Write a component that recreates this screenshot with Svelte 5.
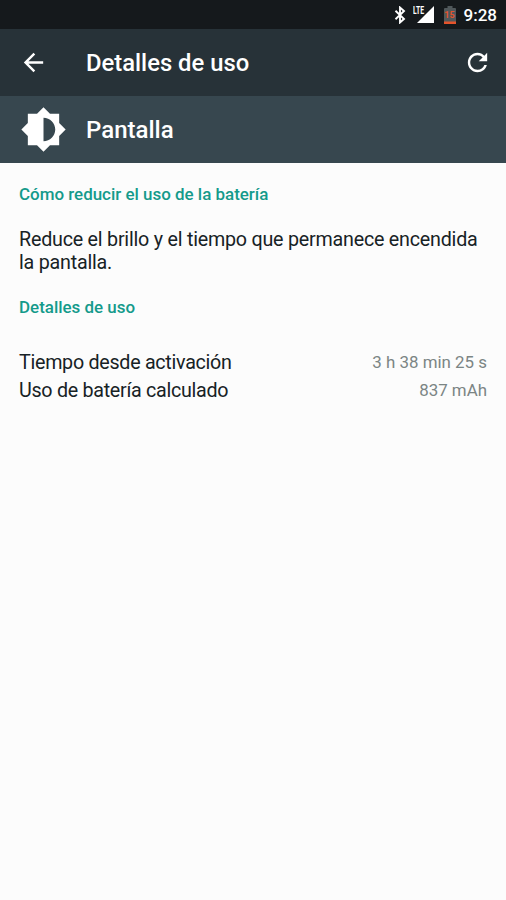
<div class="screen">
    <div class="status">
        <svg class="bluetooth" viewBox="0 0 12 18">
            <path d="M1.5 4.8L10 13L6 16.5V1.5L10 5L1.5 13.2" fill="none" stroke="#fff" stroke-width="1.9" />
        </svg>
        <div class="signal">
            <span>LTE</span>
            <svg viewBox="0 0 18 18"><path d="M0 18L18 0V18Z" fill="#fff" /></svg>
        </div>
        <div class="battery">
            <svg viewBox="0 0 12 18">
                <path d="M1 2H3.5V0H8.5V2H11Q12 2 12 3V18H0V3Q0 2 1 2Z" fill="#50585b" />
                <path d="M0 15.5H12V18H0Z" fill="#e4532b" />
            </svg>
            <span>15</span>
        </div>
        <span class="clock">9:28</span>
    </div>

    <header class="toolbar">
        <svg class="back" viewBox="0 0 24 24">
            <path d="M20 11H7.83l5.59-5.59L12 4l-8 8 8 8 1.41-1.41L7.83 13H20v-2z" fill="#fff" />
        </svg>
        <h1>{title}</h1>
        <svg class="refresh" viewBox="0 0 24 24">
            <path d="M17.65 6.35C16.2 4.9 14.21 4 12 4c-4.42 0-7.99 3.58-7.99 8s3.57 8 7.99 8c3.73 0 6.84-2.55 7.73-6h-2.08c-.82 2.33-3.04 4-5.65 4-3.31 0-6-2.69-6-6s2.69-6 6-6c1.66 0 3.14.69 4.22 1.78L13 11h7V4l-2.35 2.35z" fill="#fff" />
        </svg>
    </header>

    <div class="entry">
        <svg viewBox="0 0 24 24">
            <path d="M20 15.31L23.31 12 20 8.69V4h-4.69L12 .69 8.69 4H4v4.69L.69 12 4 15.31V20h4.69L12 23.31 15.31 20H20v-4.69zM12 18V6c3.31 0 6 2.69 6 6s-2.69 6-6 6z" fill="#fff" />
        </svg>
        <h2>Pantalla</h2>
    </div>

    <main>
        <h3>Cómo reducir el uso de la batería</h3>
        <p>Reduce el brillo y el tiempo que permanece encendida la pantalla.</p>
        <h3>{title}</h3>
        <div class="details">
            {#each details as row}
                <div class="row">
                    <span class="label">{row.label}</span>
                    <span class="value">{row.value}</span>
                </div>
            {/each}
        </div>
    </main>
</div>

<style>
    :global(body) {
        background-color: #fcfcfc;
    }
    .screen {
        min-height: 900px;
        background-color: #fcfcfc;
        font-family: Roboto, sans-serif;
        color: #172225;
    }
    h1, h2, h3, p {
        margin: 0;
    }
    svg {
        display: block;
        flex: none;
    }

    .status {
        box-sizing: border-box;
        height: 29px;
        padding-right: 9px;
        display: flex;
        align-items: center;
        justify-content: flex-end;
        background-color: #15191c;
        color: #fff;
    }
    .bluetooth {
        width: 12px;
        height: 18px;
        margin-right: 6px;
    }
    .signal {
        position: relative;
        width: 22px;
        height: 17px;
        margin-right: 10px;
    }
    .signal svg {
        width: 17px;
        height: 17px;
        margin-left: 5px;
    }
    .signal span {
        position: absolute;
        left: 1px;
        top: -1px;
        font-size: 11px;
        line-height: 11px;
        font-weight: 700;
        transform: scaleX(0.62);
        transform-origin: 0 0;
    }
    .battery {
        position: relative;
        margin-right: 8px;
    }
    .battery svg {
        width: 12px;
        height: 18px;
    }
    .battery span {
        position: absolute;
        left: 0;
        top: 4px;
        width: 12px;
        text-align: center;
        font-size: 9px;
        line-height: 10px;
        font-weight: 700;
        color: #e4532b;
    }
    .clock {
        font-size: 17px;
        font-weight: 500;
        line-height: 30px;
    }

    .toolbar {
        box-sizing: border-box;
        height: 67px;
        padding: 0 14.5px 0 19px;
        display: flex;
        align-items: center;
        background-color: #273238;
        color: #fff;
    }
    .back, .refresh {
        width: 29px;
        height: 29px;
    }
    .refresh {
        margin-bottom: 1px;
    }
    .toolbar h1 {
        flex: 1;
        margin-left: 38px;
        font-size: 23.8px;
        font-weight: 500;
    }

    .entry {
        box-sizing: border-box;
        height: 66.5px;
        padding-left: 20px;
        display: flex;
        align-items: center;
        background-color: #37474f;
        color: #fff;
    }
    .entry svg {
        width: 47px;
        height: 47px;
    }
    .entry h2 {
        margin: 2px 0 0 19px;
        font-size: 24px;
        font-weight: 500;
    }

    main {
        padding: 20.5px 19px 0;
    }
    h3 {
        font-size: 16.95px;
        line-height: 22px;
        font-weight: 500;
        color: #149a8b;
    }
    p {
        margin: 24px 0 22px;
        font-size: 19.7px;
        line-height: 22.5px;
        letter-spacing: -0.22px;
    }
    .details {
        margin-top: 30px;
    }
    .row {
        display: flex;
        justify-content: space-between;
        align-items: center;
        height: 28px;
        line-height: 28px;
    }
    .label {
        padding-top: 1px;
        font-size: 19.7px;
        letter-spacing: -0.28px;
    }
    .value {
        font-size: 16.9px;
        color: #7b8584;
    }
</style>

<script>
    const title = "Detalles de uso";

    const details = [
        { label: "Tiempo desde activación", value: "3 h 38 min 25 s" },
        { label: "Uso de batería calculado", value: "837 mAh" }
    ];
</script>
